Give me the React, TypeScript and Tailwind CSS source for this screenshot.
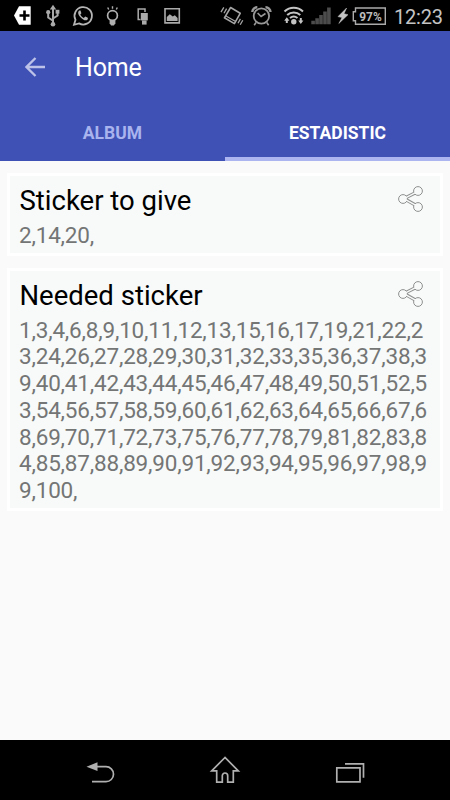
import React from 'react';

const NEEDED = [
  '1,3,4,6,8,9,10,11,12,13,15,16,17,19,21,22,2',
  '3,24,26,27,28,29,30,31,32,33,35,36,37,38,3',
  '9,40,41,42,43,44,45,46,47,48,49,50,51,52,5',
  '3,54,56,57,58,59,60,61,62,63,64,65,66,67,6',
  '8,69,70,71,72,73,75,76,77,78,79,81,82,83,8',
  '4,85,87,88,89,90,91,92,93,94,95,96,97,98,9',
  '9,100,',
];

const StatusBar = () => (
  <div className="flex h-[31px] w-full bg-black">
    <svg width="390" height="31" viewBox="0 0 390 31" fill="none">
      {/* battery saver tag */}
      <path d="M14 15.5L19 6.3h11.7v18.4H19z" fill="#fff" />
      <path d="M24.5 10.5v10M19.5 15.5h10" stroke="#000" strokeWidth="2.6" />
      {/* usb */}
      <g stroke="#aaa" strokeWidth="2">
        <path d="M53 8v16M53 20.8l-4.8-3.3v-4M53 18.5l4.6-3V12" />
        <path d="M49.8 9.5L53 4.8l3.2 4.7z" fill="#aaa" stroke="none" />
        <circle cx="48.2" cy="12.2" r="2.1" fill="#aaa" stroke="none" />
        <path d="M55.6 9.8h3.8v3.8h-3.8z" fill="#aaa" stroke="none" />
        <circle cx="53" cy="24.3" r="2.3" fill="#aaa" stroke="none" />
      </g>
      {/* whatsapp */}
      <path d="M74 24.8l1.5-5A8.7 8.7 0 1 1 79 23.4z" stroke="#b5b5b5" strokeWidth="1.8" />
      <path
        d="M79.4 10.5c-2 1.2-1.5 4 1.1 6.7s5.4 4.2 7.1 2.2c.5-.9.4-1.5-.2-1.8l-2.2-1.1-1.4 1.4c-1.7-.7-2.9-1.9-3.5-3.4l1.1-1.3-.9-2.6z"
        fill="#b5b5b5"
      />
      {/* bulb */}
      <circle cx="112.5" cy="15.5" r="4.9" stroke="#b0b0b0" strokeWidth="1.7" />
      <path d="M109.6 20h5.8v3.2l-1.5 2.2h-2.8l-1.5-2.2z" fill="#b0b0b0" />
      <path d="M112.5 6.3v2.4M107.7 7.5l1 2M117.3 7.5l-1 2" stroke="#b0b0b0" strokeWidth="1.4" />
      {/* devices */}
      <path d="M140.5 19.5h-2.3V9h6.8v3" stroke="#aaa" strokeWidth="1.5" />
      <path d="M140.8 13h7v7.4h-7z" fill="#aaa" />
      <path d="M142 20.4h4.6v4.2H142z" fill="#aaa" />
      {/* picture */}
      <path d="M165 8.7h14.3v14.2H165z" stroke="#aaa" strokeWidth="1.6" />
      <path d="M166.8 21v-4l3-2.8 3 2.4 2-1.4 2.8 2.8v3z" fill="#aaa" />
      {/* vibrate */}
      <g stroke="#a5a5a5" strokeWidth="1.6">
        <path d="M230.6 7.5l9.6 5.8-5.8 10.3-10-5.8z" strokeLinejoin="round" />
        <path d="M225.6 15.8l10 5.8" strokeWidth="1.2" />
        <path d="M221 12.2l2.8-4.8M224 13.2l2.6-4.6M238 23.2l2.4-4.3M240.2 24.8l2.6-4.6" strokeWidth="1.3" />
      </g>
      {/* alarm */}
      <circle cx="261.4" cy="16" r="7.7" stroke="#999" strokeWidth="1.8" />
      <path d="M257.6 13l3.5 3.5 4.4-3M256 22.5l-1.8 2.7M266.8 22.5l1.8 2.7" stroke="#999" strokeWidth="1.6" />
      <path d="M252.3 12a4.8 4.8 0 0 1 5-4.7M270.5 12a4.8 4.8 0 0 0-5-4.7" stroke="#999" strokeWidth="2.4" />
      {/* wifi */}
      <g stroke="#c4c4c4" strokeWidth="2">
        <path d="M284.5 11.5a13.5 13.5 0 0 1 18.5 0M287.2 15a9.6 9.6 0 0 1 13.1 0M290 18a5.9 5.9 0 0 1 7.5 0" />
        <circle cx="293.8" cy="21.7" r="2.7" fill="#c4c4c4" stroke="none" />
        <path d="M286.8 19v4M300.8 18v4" />
        <path d="M284.2 20.8h5.2l-2.6-3.5zM298.2 20.5h5.2l-2.6 3.5z" fill="#c4c4c4" stroke="none" />
      </g>
      {/* signal */}
      <path
        d="M311.3 20.7h3.6v3.6h-3.6zM315.3 18.3h3.6v6h-3.6zM319.2 15h3.6v9.3h-3.6zM323.2 11.5h3.6v12.8h-3.6zM327.1 7.5h3.6v16.8h-3.6z"
        fill="#4c4c4c"
      />
      {/* charging bolt and battery */}
      <path d="M346.6 8L338 16.6l4 1-3.2 5.9 9.2-8.8-4-1z" fill="#c4c4c4" stroke="#c4c4c4" strokeWidth=".5" />
      <path d="M355.5 8h29.8v16.3h-29.8v-3.6h-2.2v-9h2.2z" stroke="#aaa" strokeWidth="1.4" />
      <text
        x="370.5"
        y="21"
        textAnchor="middle"
        textLength="22.5"
        lengthAdjust="spacingAndGlyphs"
        className="font-[Roboto,sans-serif] text-[13px] font-bold"
        fill="#bbb"
      >
        97%
      </text>
    </svg>
    <span className="mt-[2px] ml-[4px] text-[20px] leading-[30px] tracking-[-0.2px] text-[#c4c4c4]">12:23</span>
  </div>
);

const ShareIcon = () => (
  <svg className="mt-[9px] mr-[15px] shrink-0" width="28" height="30" viewBox="0 0 28 30" fill="none">
    <path d="M7 13.5l14-7M7 13.5l14 8" stroke="#8f8f8f" strokeWidth="3.4" />
    <g stroke="#8f8f8f" strokeWidth="1" fill="#f7faf9">
      <circle cx="6" cy="14" r="4.4" />
      <circle cx="21" cy="6" r="4.4" />
      <circle cx="21" cy="22" r="4.4" />
    </g>
    <path d="M9 12.6l9-4.7M9 14.8l9 5" stroke="#f7faf9" strokeWidth="1.5" />
  </svg>
);

type StickerCardProps = {
  title: string;
  lines: string[];
};

const StickerCard = ({ title, lines }: StickerCardProps) => (
  <section className="border-[3px] border-white bg-[#f7faf9] pb-[4px]">
    <div className="flex h-[46px] justify-between">
      <h2 className="pt-[8px] pl-[9.5px] text-[27.5px] leading-[33px] text-black">{title}</h2>
      <ShareIcon />
    </div>
    <div className="pl-[9px] text-[22.5px] leading-[26.7px] tracking-[-0.19px] whitespace-nowrap text-[#747575]">
      {lines.map((line) => (
        <p key={line}>{line}</p>
      ))}
    </div>
  </section>
);

const NavigationBar = () => (
  <div className="h-[60px] w-full bg-black">
    <svg width="450" height="60" viewBox="0 0 450 60" fill="none" stroke="#b0b0b0" strokeWidth="1.7">
      <path d="M96 26.7h10a7.4 7.4 0 0 1 0 15H92" />
      <path d="M86.5 26.7l11-4.4v8.6z" fill="#b0b0b0" stroke="none" />
      <path d="M225 17.5l-13.3 13.3h5v11.4h5.6v-6.5a2.7 2.7 0 0 1 5.4 0v6.5h5.6V30.8h5z" />
      <path d="M336.8 27.8h23.2v14h-23.2zM345 23.9h18.5v13.8" />
    </svg>
  </div>
);

const App = () => {
  return (
    <div className="flex h-[800px] w-[450px] flex-col overflow-hidden bg-[#fafafa] font-[Roboto,sans-serif]">
      <StatusBar />
      <header className="flex h-[130px] shrink-0 flex-col bg-[#3f51b5]">
        <div className="flex h-[72px] items-center pl-[25px]">
          <svg width="20" height="20" viewBox="0 0 20 20" fill="none" stroke="#bdc3e8" strokeWidth="2.3">
            <path d="M20 10H2M10.5 1L1.5 10l9 9" />
          </svg>
          <h1 className="mt-[2px] ml-[30px] text-[25px] leading-[30px] tracking-[-0.2px] text-white">Home</h1>
        </div>
        <div className="flex h-[58px] text-[17.5px] font-bold">
          <button className="flex w-1/2 justify-center pt-[16px] leading-[28px] text-[#a9b4ee]">ALBUM</button>
          <button className="flex w-1/2 justify-center border-b-4 border-[#acb5f0] pt-[16px] leading-[28px] text-white">
            ESTADISTIC
          </button>
        </div>
      </header>
      <main className="flex grow flex-col gap-[12px] px-[7px] pt-[12px]">
        <StickerCard title="Sticker to give" lines={['2,14,20,']} />
        <StickerCard title="Needed sticker" lines={NEEDED} />
      </main>
      <NavigationBar />
    </div>
  );
};

export default App;
